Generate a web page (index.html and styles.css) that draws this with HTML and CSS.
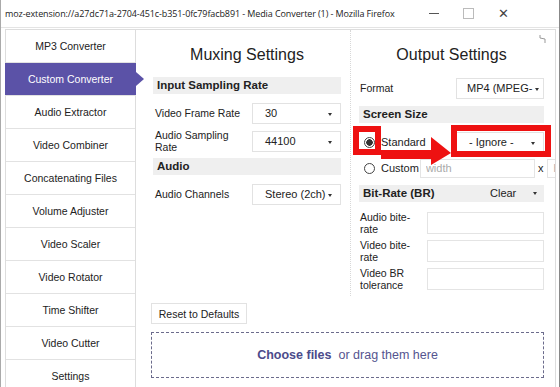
FILE: index.html
```html
<!DOCTYPE html>
<html lang="en">
<head>
    <meta charset="UTF-8">
    <meta name="viewport" content="width=device-width, initial-scale=1.0">
    <title>Media Converter</title>
    <link rel="stylesheet" href="styles.css">
</head>
<body>
    <div class="window">
        <div class="titlebar">
            <span class="title">moz-extension://a27dc71a-2704-451c-b351-0fc79facb891 - Media Converter (1) - Mozilla Firefox</span>
            <div class="controls">
                <span class="ctl min"></span>
                <span class="ctl max"></span>
                <span class="ctl close">&#x2715;</span>
            </div>
        </div>

        <div class="page">
            <nav class="sidebar">
                <a class="item">MP3 Converter</a>
                <a class="item active">Custom Converter</a>
                <a class="item">Audio Extractor</a>
                <a class="item">Video Combiner</a>
                <a class="item">Concatenating Files</a>
                <a class="item">Volume Adjuster</a>
                <a class="item">Video Scaler</a>
                <a class="item">Video Rotator</a>
                <a class="item">Time Shifter</a>
                <a class="item">Video Cutter</a>
                <a class="item">Settings</a>
            </nav>

            <main class="main">
                <div class="columns">
                    <section class="col mux">
                        <h2>Muxing Settings</h2>
                        <div class="bar">Input Sampling Rate</div>
                        <div class="row first">
                            <label>Video Frame Rate</label>
                            <div class="select wide">30<span class="caret"></span></div>
                        </div>
                        <div class="row">
                            <label>Audio Sampling<br>Rate</label>
                            <div class="select wide">44100<span class="caret"></span></div>
                        </div>
                        <div class="bar">Audio</div>
                        <div class="row first">
                            <label>Audio Channels</label>
                            <div class="select wide">Stereo (2ch)<span class="caret"></span></div>
                        </div>
                    </section>

                    <section class="col output">
                        <svg class="pin" width="7" height="10" viewBox="0 0 7 10">
                            <path d="M1 1 L1 4 L6 5 L6 9" fill="none" stroke="#999" stroke-width="1"/>
                        </svg>
                        <h2>Output Settings</h2>
                        <div class="row format">
                            <label>Format</label>
                            <div class="select">MP4 (MPEG-<span class="caret"></span></div>
                        </div>
                        <div class="bar">Screen Size</div>
                        <div class="row size">
                            <span class="radio checked"></span>
                            <span class="radio-label">Standard</span>
                            <div class="select ignore">- Ignore -<span class="caret"></span></div>
                        </div>
                        <div class="row custom">
                            <span class="radio"></span>
                            <span class="radio-label">Custom</span>
                            <input class="field dim" type="text" placeholder="width">
                            <span class="times">x</span>
                            <input class="field dim" type="text" placeholder="height">
                        </div>
                        <div class="bar split">Bit-Rate (BR)<span class="clear">Clear<span class="caret"></span></span></div>
                        <div class="row rate">
                            <label>Audio bite-<br>rate</label>
                            <input class="field" type="text">
                        </div>
                        <div class="row rate">
                            <label>Video bite-<br>rate</label>
                            <input class="field" type="text">
                        </div>
                        <div class="row rate">
                            <label>Video BR<br>tolerance</label>
                            <input class="field" type="text">
                        </div>

                        <span class="mark mark-radio"></span>
                        <span class="mark mark-select"></span>
                        <svg class="mark-arrow" width="72" height="34" viewBox="0 0 72 34">
                            <polygon points="0,19 50,19 50,6 70,22 50,34 50,28 0,28" fill="#ee1111"/>
                        </svg>
                    </section>
                </div>

                <button class="reset">Reset to Defaults</button>
                <div class="drop">
                    <span class="choose">Choose files</span> or drag them here
                </div>
            </main>
        </div>
    </div>
</body>
</html>
```

FILE: styles.css
```css
body {
    margin: 0;
    font-family: 'Liberation Sans', Arial, sans-serif;
    color: #222;
    background: #fff;
}
.window {
    width: 560px;
    height: 387px;
    box-sizing: border-box;
    border-left: 1px solid #aaa;
    border-right: 1px solid #888;
    overflow: hidden;
}
.titlebar {
    height: 27px;
    display: flex;
    align-items: center;
    justify-content: space-between;
    padding-left: 4px;
    border-bottom: 1px solid #e4e4e4;
    font-family: 'Open Sans', 'Noto Sans', sans-serif;
    font-size: 9px;
    letter-spacing: -0.1px;
    color: #222;
}
.title {
    white-space: nowrap;
}
.controls {
    display: flex;
    align-items: center;
    margin-right: 38px;
}
.ctl {
    width: 35px;
    display: flex;
    justify-content: center;
    align-items: center;
    color: #444;
}
.min::before {
    content: '';
    width: 10px;
    border-top: 1px solid #555;
}
.max::before {
    content: '';
    width: 9px;
    height: 9px;
    border: 1px solid #bbb;
}
.close {
    font-size: 13px;
    font-family: 'DejaVu Sans', sans-serif;
}
.page {
    display: flex;
    padding: 1px 3px 0 4px;
    height: 360px;
}
.sidebar {
    width: 131px;
    flex-shrink: 0;
    box-sizing: border-box;
    border: 1px solid #ddd;
    border-bottom: none;
    display: flex;
    flex-direction: column;
}
.item {
    height: 32px;
    flex-shrink: 0;
    border-bottom: 1px solid #e2e2e2;
    display: flex;
    align-items: center;
    justify-content: center;
    font-size: 10.5px;
    color: #222;
    position: relative;
}
.item.active {
    background: #5b52a7;
    color: #fff;
    margin: 0 -1px;
}
.item.active::after {
    content: '';
    position: absolute;
    right: -8px;
    top: 9px;
    border-left: 8px solid #5b52a7;
    border-top: 7px solid transparent;
    border-bottom: 7px solid transparent;
}
.main {
    flex: 1;
    min-width: 0;
    border-top: 1px solid #ddd;
    border-right: 1px solid #ddd;
    padding-left: 15px;
}
.columns {
    display: flex;
    height: 266px;
    margin-left: -15px;
}
.col {
    box-sizing: border-box;
    font-size: 10.5px;
}
.mux {
    flex: 0 0 214px;
    padding: 0 9px 0 17px;
}
.output {
    flex: 0 0 205px;
    min-width: 0;
    overflow: hidden;
    padding: 0 11px 0 8px;
    border-left: 1px dotted #d8d8d8;
    position: relative;
}
h2 {
    margin: 15px 0 12px;
    font-size: 16px;
    line-height: 20px;
    font-weight: normal;
    text-align: center;
    color: #222;
}
.bar {
    height: 17px;
    line-height: 17px;
    padding-left: 4px;
    background: #efefef;
    font-weight: bold;
    font-size: 11.5px;
    margin-bottom: 7px;
}
.row {
    display: flex;
    align-items: center;
    justify-content: space-between;
    min-height: 22px;
    margin-bottom: 5px;
}
.row.first {
    margin-top: 8px;
}
.mux .row label {
    padding-left: 2px;
    line-height: 12px;
}
.select {
    height: 21px;
    box-sizing: border-box;
    border: 1px solid #e2e2e2;
    background: #fff;
    display: flex;
    align-items: center;
    padding-left: 12px;
    position: relative;
    font-size: 11px;
    overflow: hidden;
    white-space: nowrap;
}
.select.wide {
    width: 89px;
}
.caret {
    position: absolute;
    right: 8px;
    top: 9px;
    border-top: 3px solid #333;
    border-left: 2.5px solid transparent;
    border-right: 2.5px solid transparent;
}
.format {
    margin-bottom: 7px;
}
.format label {
    padding-left: 1px;
}
.format .select {
    width: 88px;
    padding-left: 10px;
}
.format .caret {
    right: 4px;
}
.size {
    justify-content: flex-start;
    margin-top: 8px;
    margin-bottom: 4px;
}
.radio {
    width: 11px;
    height: 11px;
    box-sizing: border-box;
    border: 1px solid #444;
    border-radius: 50%;
    margin: 0 6px 0 5px;
    flex-shrink: 0;
}
.radio.checked {
    background: radial-gradient(circle, #333 0, #333 3px, #fff 3.5px);
}
.radio-label {
    font-size: 11px;
}
.select.ignore {
    width: 88px;
    height: 20px;
    margin-left: auto;
    padding-left: 12px;
}
.custom {
    justify-content: flex-start;
    margin-bottom: 6px;
    width: 260px;
}
.custom .radio-label {
    margin-right: 1px;
}
.field {
    height: 20px;
    box-sizing: border-box;
    border: 1px solid #e4e4e4;
    font-family: inherit;
    font-size: 11px;
    padding: 0 5px;
    outline: none;
}
.field.dim {
    width: 115px;
    height: 19px;
    flex-shrink: 0;
}
.field::placeholder {
    color: #aaa;
}
.times {
    margin: 0 4px 0 3px;
    font-size: 11px;
}
.split {
    display: flex;
    justify-content: space-between;
    position: relative;
    margin-bottom: 9px;
}
.clear {
    font-weight: normal;
    font-size: 11px;
    width: 54px;
    position: relative;
}
.clear .caret {
    right: 7px;
    top: 7px;
}
.rate {
    margin-bottom: 4px;
    min-height: 24px;
}
.rate label {
    line-height: 12px;
    padding-left: 1px;
}
.rate .field {
    width: 117px;
    height: 22px;
}
.pin {
    position: absolute;
    right: 9px;
    top: 4px;
}
.mark {
    position: absolute;
    border: 6px solid #ee1111;
    box-sizing: border-box;
}
.mark-radio {
    left: 2px;
    top: 96px;
    width: 28px;
    height: 29px;
}
.mark-select {
    left: 100px;
    top: 95px;
    width: 100px;
    height: 32px;
}
.mark-arrow {
    position: absolute;
    left: 30px;
    top: 101px;
}
.reset {
    margin-top: 7px;
    height: 21px;
    width: 96px;
    padding: 0;
    background: #fff;
    border: 1px solid #e2e2e2;
    font-family: inherit;
    font-size: 10.5px;
    color: #222;
}
.drop {
    margin-top: 8px;
    width: 393px;
    height: 46px;
    box-sizing: border-box;
    border: 1px dashed #6b6b8c;
    display: flex;
    align-items: center;
    justify-content: center;
    font-size: 12.5px;
    color: #55558f;
    gap: 7px;
}
.choose {
    font-weight: bold;
    color: #4b4b8b;
}
```
